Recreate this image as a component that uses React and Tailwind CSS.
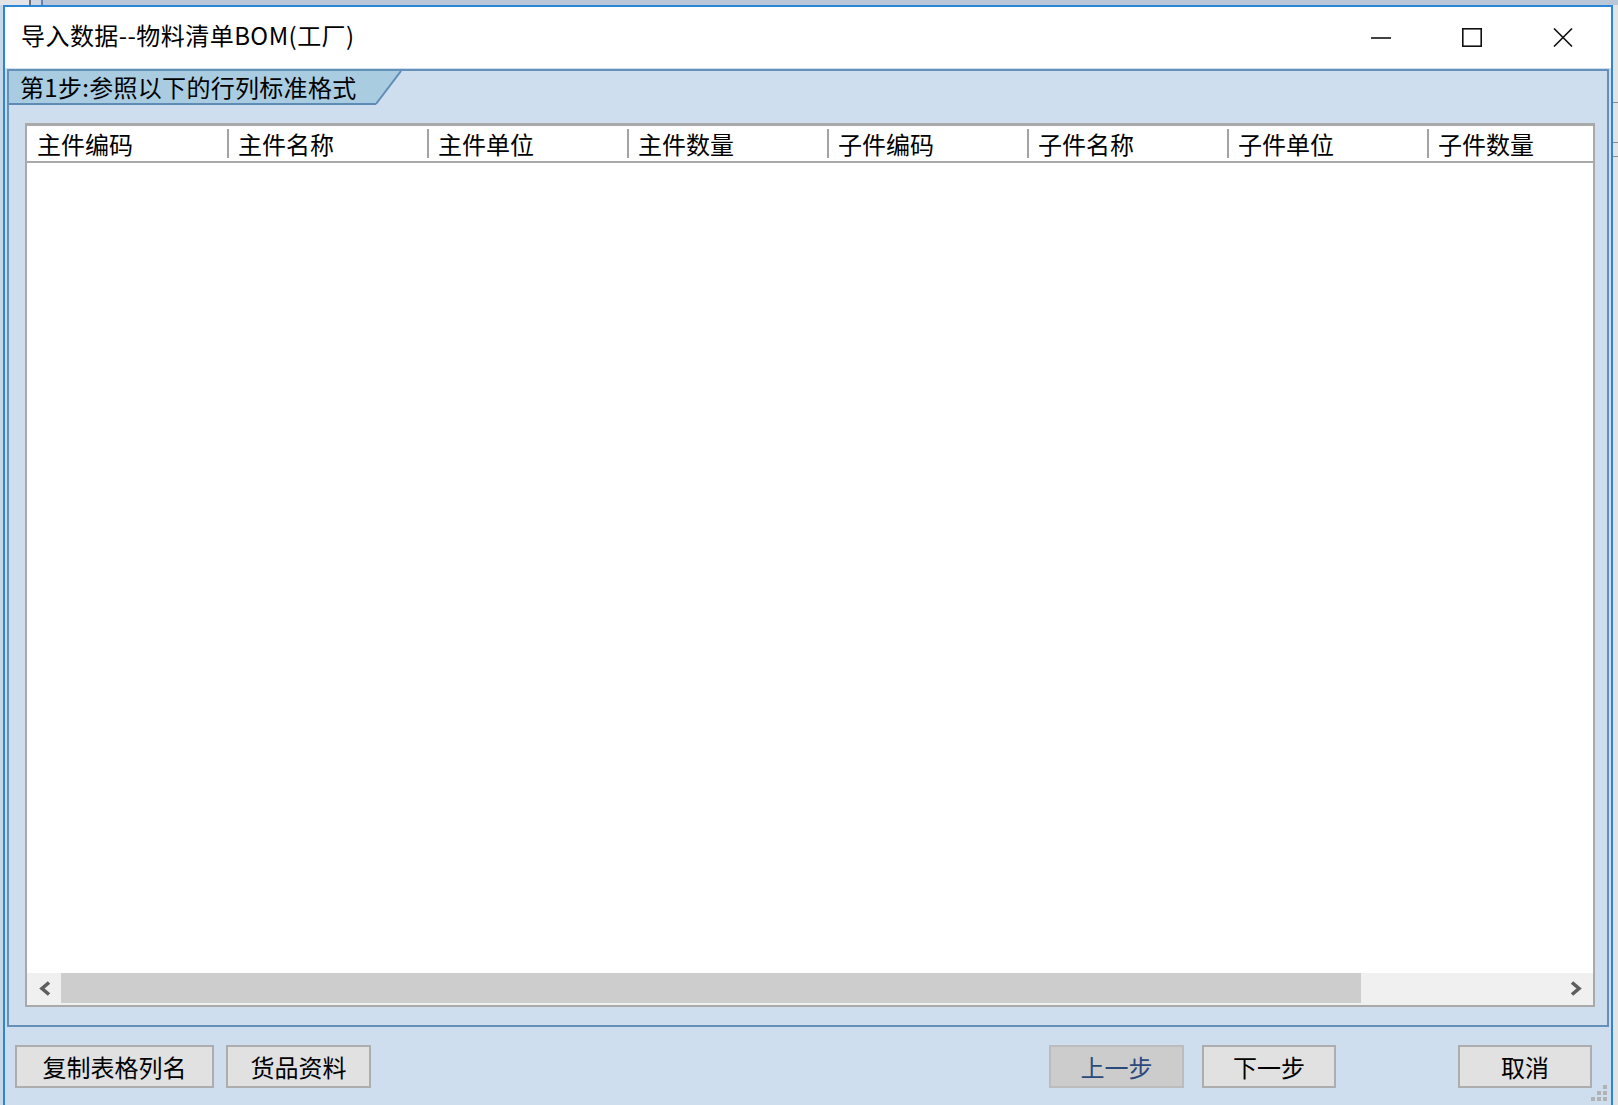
import React from "react";

const headers = ["主件编码", "主件名称", "主件单位", "主件数量", "子件编码", "子件名称", "子件单位", "子件数量"];

function Btn({ children, className = "" }) {
  return (
    <div
      className={
        "h-[43px] shrink-0 flex items-center justify-center border-2 text-[24px] leading-none " +
        className
      }
    >
      {children}
    </div>
  );
}

export default function App() {
  return (
    <div className="w-[1618px] h-[1105px] overflow-hidden bg-[#e4e4e4] flex flex-col font-['Noto_Sans_CJK_SC','Noto_Sans',sans-serif] text-black">
      {/* background strip above window */}
      <div className="h-[5px] flex shrink-0">
        <div className="w-[29px] bg-[#e2e4e8]" />
        <div className="w-[2px] bg-[#6e7179]" />
        <div className="w-[10px] bg-[#cdd6e2]" />
        <div className="w-[2px] bg-[#5d86b2]" />
        <div className="flex-1 bg-[#b9c7d9]" />
      </div>

      <div className="flex-1 flex min-h-0 min-w-0">
        <div className="w-[3px] shrink-0 bg-[#c9d8e9]" />

        {/* window */}
        <div className="flex-1 min-w-0 overflow-hidden flex flex-col border-t-2 border-l-2 border-r-2 border-[#2a87d8] bg-[#cedeee] relative">
          {/* title bar */}
          <div className="h-[61px] shrink-0 bg-white flex items-center">
            <div className="pl-[16px] pb-[6px] text-[24px] leading-none tracking-[0.45px]">导入数据--物料清单BOM(工厂)</div>
            <div className="ml-auto flex h-full pr-[3px]">
              <div className="w-[91px] h-full flex items-center justify-center">
                <svg width="20" height="4" viewBox="0 0 20 4">
                  <line x1="0" y1="2" x2="20" y2="2" stroke="#111" strokeWidth="1.6" />
                </svg>
              </div>
              <div className="w-[91px] h-full flex items-center justify-center">
                <svg width="20" height="19" viewBox="0 0 20 19">
                  <rect x="0.8" y="0.8" width="18.4" height="17.4" fill="none" stroke="#111" strokeWidth="1.6" />
                </svg>
              </div>
              <div className="w-[91px] h-full flex items-center justify-center">
                <svg width="20" height="19" viewBox="0 0 20 19">
                  <path d="M1 0.5 L19 18.5 M19 0.5 L1 18.5" stroke="#111" strokeWidth="1.6" fill="none" />
                </svg>
              </div>
            </div>
          </div>

          {/* body */}
          <div className="flex-1 flex flex-col px-[2px] pt-[1px] min-w-0">
            <div className="h-[958px] shrink-0 border-2 border-[#6590b8] flex flex-col min-w-0">
              {/* step tab */}
              <div className="relative h-[34px] shrink-0">
                <svg className="absolute left-0 top-0" width="400" height="34" viewBox="0 0 400 34">
                  <polygon points="0,0 392,0 367,33 0,33" fill="#a9cce0" />
                  <line x1="0" y1="33" x2="367" y2="33" stroke="#5f8cb6" strokeWidth="2" />
                  <line x1="392" y1="0" x2="367" y2="33" stroke="#5f8cb6" strokeWidth="2" />
                </svg>
                <div className="relative pl-[11px] h-[32px] flex items-center text-[24px] leading-none tracking-[0.3px] whitespace-nowrap">
                  第1步:参照以下的行列标准格式
                </div>
              </div>

              {/* table */}
              <div className="mt-[18px] ml-[16px] mr-[12px] mb-[18px] flex-1 min-w-0 flex flex-col bg-white border-2 border-t-[3px] border-[#a9a9a9] min-h-0 overflow-hidden">
                <div className="h-[37px] shrink-0 flex overflow-hidden border-b-2 border-[#a9a9a9]">
                  {headers.map((h, i) => (
                    <div key={h} className="w-[200px] shrink-0 flex items-center">
                      {i === 0 ? (
                        <span className="pl-[10px] text-[24px] leading-none">{h}</span>
                      ) : (
                        <>
                          <span className="w-[2px] h-[29px] bg-[#a3a3a3]" />
                          <span className="ml-[9px] text-[24px] leading-none">{h}</span>
                        </>
                      )}
                    </div>
                  ))}
                </div>
                <div className="flex-1" />
                <div className="h-[32px] shrink-0 flex bg-[#f0f0f0]">
                  <div className="w-[34px] h-[30px] shrink-0 flex items-center justify-center">
                    <svg width="13" height="15" viewBox="0 0 13 15">
                      <polyline points="11,1.5 4,7.5 11,13.5" fill="none" stroke="#5f5f5f" strokeWidth="3.6" />
                    </svg>
                  </div>
                  <div className="w-[1300px] shrink-0 h-[30px] bg-[#cdcdcd]" />
                  <div className="flex-1" />
                  <div className="w-[34px] h-[30px] shrink-0 flex items-center justify-center">
                    <svg width="13" height="15" viewBox="0 0 13 15">
                      <polyline points="2,1.5 9,7.5 2,13.5" fill="none" stroke="#5f5f5f" strokeWidth="3.6" />
                    </svg>
                  </div>
                </div>
              </div>
            </div>

            {/* buttons */}
            <div className="mt-[18px] flex pl-[8px] pr-[17px]">
              <Btn className="w-[199px] bg-[#e1e1e1] border-[#adadad]">复制表格列名</Btn>
              <Btn className="w-[145px] ml-[12px] bg-[#e1e1e1] border-[#adadad]">货品资料</Btn>
              <Btn className="w-[135px] ml-auto bg-[#cccccc] border-[#bcbcbc] text-[#2b4a7c]">上一步</Btn>
              <Btn className="w-[134px] ml-[18px] bg-[#e1e1e1] border-[#adadad]">下一步</Btn>
              <Btn className="w-[134px] ml-[122px] bg-[#e1e1e1] border-[#adadad]">取消</Btn>
            </div>
          </div>

          {/* resize grip */}
          <div className="absolute right-[4px] bottom-[4px] w-[16px] h-[16px]">
            <svg width="16" height="16" viewBox="0 0 16 16">
              <rect x="12" y="0" width="4" height="4" fill="#b2b2b2" />
              <rect x="6" y="6" width="4" height="4" fill="#b2b2b2" />
              <rect x="12" y="6" width="4" height="4" fill="#b2b2b2" />
              <rect x="0" y="12" width="4" height="4" fill="#b2b2b2" />
              <rect x="6" y="12" width="4" height="4" fill="#b2b2b2" />
              <rect x="12" y="12" width="4" height="4" fill="#b2b2b2" />
            </svg>
          </div>
        </div>

        {/* background strip right */}
        <div className="w-[5px] shrink-0 bg-[#e3e3e3] flex flex-col">
          <div className="h-[97px]" />
          <div className="h-[1px] bg-[#8d8d8d]" />
          <div className="h-[39px]" />
          <div className="h-[1px] bg-[#8d8d8d]" />
          <div className="h-[13px]" />
          <div className="h-[1px] bg-[#8d8d8d]" />
        </div>
      </div>
    </div>
  );
}
